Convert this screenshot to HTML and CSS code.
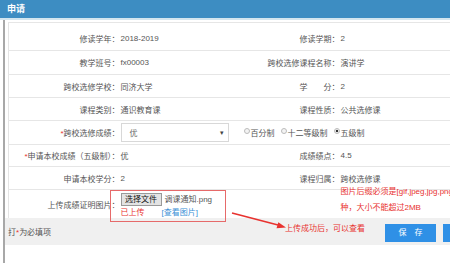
FILE: index.html
```html
<!DOCTYPE html>
<html lang="zh">
<head>
<meta charset="utf-8">
<link rel="stylesheet" href="styles.css">
</head>
<body>
<div class="page">
  <div class="head">申请</div>
  <div class="body">
    <table class="form">
      <colgroup><col class="c1"><col class="c2"><col class="c3"><col class="c4"></colgroup>
      <tr class="r1"><td class="lab">修读学年：</td><td class="val">2018-2019</td><td class="lab">修读学期：</td><td class="val">2</td></tr>
      <tr class="r2"><td class="lab">教学班号：</td><td class="val">fx00003</td><td class="lab">跨校选修课程名称：</td><td class="val">演讲学</td></tr>
      <tr class="r3"><td class="lab">跨校选修学校：</td><td class="val">同济大学</td><td class="lab">学　　分：</td><td class="val">2</td></tr>
      <tr class="r4"><td class="lab">课程类别：</td><td class="val">通识教育课</td><td class="lab">课程性质：</td><td class="val">公共选修课</td></tr>
      <tr class="r5"><td class="lab"><span class="req">*</span>跨校选修成绩：</td>
        <td class="val" colspan="3">
          <div class="grade">
            <div class="select"><span>优</span><span class="caret">▾</span></div>
            <div class="radios">
              <span class="radio"><i class="dot"></i>百分制</span>
              <span class="radio"><i class="dot"></i>十二等级制</span>
              <span class="radio"><i class="dot on"></i>五级制</span>
            </div>
          </div>
        </td></tr>
      <tr class="r6"><td class="lab"><span class="req">*</span>申请本校成绩（五级制）：</td><td class="val">优</td><td class="lab">成绩绩点：</td><td class="val">4.5</td></tr>
      <tr class="r7"><td class="lab">申请本校学分：</td><td class="val">2</td><td class="lab">课程归属：</td><td class="val">跨校选修课</td></tr>
      <tr class="r8"><td class="lab">上传成绩证明图片：</td>
        <td class="val up">
          <div class="file"><span class="btn-file">选择文件</span><span class="fname">调课通知.png</span></div>
          <div class="status"><span class="done">已上传</span><span class="view">[查看图片]</span></div>
        </td>
        <td></td>
        <td class="val hint"><div class="hint-text">图片后缀必须是[gif,jpeg,jpg,png]四<br>种，大小不能超过2MB</div></td></tr>
    </table>
    <div class="foot">
      <span class="note">打<span class="req">*</span>为必填项</span>
      <span class="btn">保　存</span>
      <span class="btn">返　回</span>
    </div>
  </div>
  <div class="mark-box"></div>
  <svg class="mark-arrow" width="450" height="263" viewBox="0 0 450 263">
    <line x1="232" y1="213" x2="278" y2="225" stroke="#e8322f" stroke-width="1.6"/>
    <polygon points="286,227.5 276.5,228.3 278.3,222.2" fill="#e8322f"/>
  </svg>
  <div class="mark-text">上传成功后，可以查看</div>
</div>
</body>
</html>
```

FILE: styles.css
```css
html, body {
  margin: 0;
  padding: 0;
}
body {
  width: 450px;
  height: 263px;
  overflow: hidden;
  background: #fff;
  font-family: "Liberation Sans", "Noto Sans CJK SC", sans-serif;
  font-size: 8px;
  color: #555;
}
.page {
  position: relative;
  width: 450px;
  height: 263px;
  overflow: hidden;
}
.head {
  height: 18px;
  line-height: 18px;
  background: #3d8dc2;
  color: #fff;
  font-size: 9px;
  font-weight: bold;
  padding-left: 7px;
  border-bottom: 2px solid #d3e6ef;
}
.body {
  margin-left: 3px;
  border-left: 2px solid #a8a8a8;
  height: 243px;
  padding-top: 2px;
  box-sizing: border-box;
}
.form {
  margin-left: 3px;
  width: 500px;
  table-layout: fixed;
  border-collapse: collapse;
  border-left: 1px solid #e4e4e4;
}
.c1 { width: 111px; }
.c2 { width: 110px; }
.c3 { width: 110px; }
.c4 { width: 169px; }
.form td {
  padding: 0;
  border-top: 1px solid #e6e6e6;
  vertical-align: middle;
  white-space: nowrap;
}
.r1 td { height: 24px; padding-top: 3px; }
.r2 td { height: 23px; }
.r3 td, .r4 td, .r7 td { height: 22px; }
.r5 td { height: 23px; }
.r6 td { height: 21px; }
.r8 td { height: 28px; }
.lab {
  text-align: right;
}
.val {
  padding-left: 1px !important;
}
.req { color: #e8322f; }
.grade {
  display: flex;
  align-items: center;
}
.select {
  width: 108px;
  height: 19px;
  box-sizing: border-box;
  border: 1px solid #d8d8d8;
  display: flex;
  align-items: center;
  justify-content: space-between;
  padding: 0 4px 0 8px;
  color: #666;
}
.caret { font-size: 7px; color: #444; }
.radios {
  display: flex;
  gap: 6px;
  margin-left: 15px;
}
.radio {
  display: flex;
  align-items: center;
  gap: 1px;
}
.dot {
  width: 4px;
  height: 4px;
  border: 1px solid #bbb;
  border-radius: 50%;
  display: inline-block;
  box-sizing: content-box;
  background: #f4f4f4;
  position: relative;
  top: -2px;
}
.dot.on {
  background: radial-gradient(circle, #333 0 1.3px, #f4f4f4 1.6px);
}
.up {
  vertical-align: top !important;
  line-height: 10px;
}
.file {
  display: flex;
  align-items: center;
  gap: 3px;
  margin-top: 3px;
  height: 13px;
}
.btn-file {
  display: inline-block;
  width: 39px;
  height: 11px;
  line-height: 11px;
  text-align: center;
  background: #e3e3e3;
  border: 1px solid #999;
  color: #111;
}
.fname { color: #555; }
.status {
  display: flex;
  gap: 17px;
  margin-top: 2px;
  height: 10px;
}
.done { color: #e8322f; }
.view { color: #3b8fd6; }
.hint {
  color: #e8322f;
  vertical-align: top !important;
}
.hint-text {
  line-height: 16px;
  margin-top: -6px;
  height: 28px;
}
.foot {
  width: 495px;
  height: 27px;
  background: #f0f0f0;
  display: flex;
  align-items: flex-start;
  gap: 7px;
  padding-left: 3px;
  padding-right: 6px;
  box-sizing: border-box;
}
.note {
  flex: 1;
  align-self: center;
  color: #555;
}
.btn {
  width: 51px;
  height: 18px;
  line-height: 18px;
  margin-top: 6px;
  background: #2f90e6;
  color: #fff;
  text-align: center;
}
.mark-box {
  position: absolute;
  left: 110px;
  top: 190px;
  width: 114px;
  height: 30px;
  border: 1px solid #e66a6a;
}
.mark-arrow {
  position: absolute;
  left: 0;
  top: 0;
}
.mark-text {
  position: absolute;
  left: 285px;
  top: 222px;
  color: #e8322f;
  white-space: nowrap;
}
```
